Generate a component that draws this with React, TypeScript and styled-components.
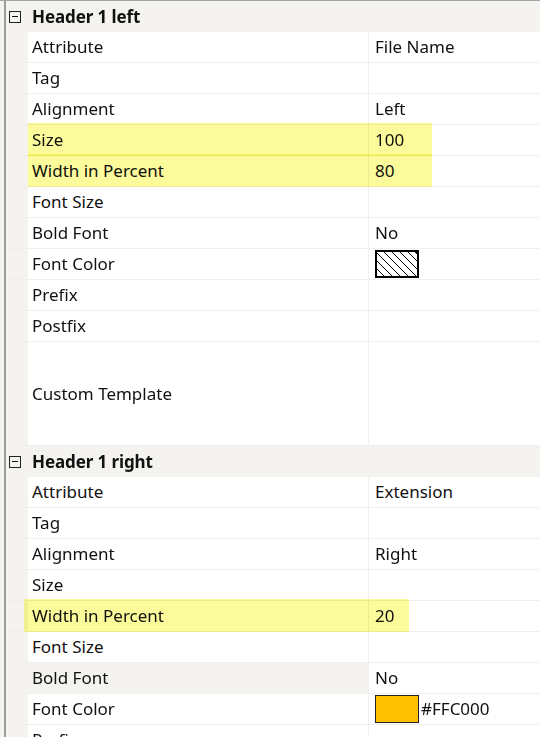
import React from "react";
import styled, { createGlobalStyle } from "styled-components";

const Global = createGlobalStyle`
  html, body { margin: 0; padding: 0; overflow: hidden; background: #f4f3ef; }
  body { font-family: "Noto Sans", "Open Sans", sans-serif; font-size: 17px; color: #111; }
`;

const Page = styled.div`
  border-top: 1px solid #a6a6a6;
  padding-left: 4px;
  height: 736px;
  overflow: hidden;
`;

const Sheet = styled.div`
  border-left: 2px solid #9c9c9c;
  display: flex;
  flex-direction: column;
  min-height: 100%;
`;

const HeaderRow = styled.div`
  display: grid;
  grid-template-columns: 22px 1fr;
  align-items: center;
  height: 31px;
  background: #f4f3ef;
`;

const Toggle = styled.span`
  width: 10px;
  height: 10px;
  border: 1px solid #222;
  margin-left: 3px;
  display: flex;
  align-items: center;
  justify-content: center;
  &::before {
    content: "";
    width: 6px;
    height: 1px;
    background: #111;
  }
`;

const HeaderTitle = styled.span`
  font-weight: 700;
  padding-left: 4px;
  letter-spacing: -0.1px;
`;

const Row = styled.div<{ $tall?: boolean; $mark?: number; $markShift?: number }>`
  position: relative;
  display: grid;
  grid-template-columns: 22px 340px 1fr;
  height: ${(p) => (p.$tall ? 103 : 30)}px;
  border-bottom: 1px solid #f0efeb;
  ${(p) =>
    p.$mark
      ? `&::after {
    content: "";
    position: absolute;
    left: ${22 + (p.$markShift ?? 0)}px;
    top: -2px;
    bottom: -1px;
    width: ${p.$mark}px;
    background: #fbfb9c;
    mix-blend-mode: multiply;
    filter: blur(0.6px);
    pointer-events: none;
  }`
      : ""}
`;

const Gutter = styled.span`
  background: #f4f3ef;
`;

const NameCell = styled.span<{ $selected?: boolean }>`
  background: ${(p) => (p.$selected ? "#f4f3ef" : "#ffffff")};
  display: flex;
  align-items: center;
  padding-left: 4px;
  padding-bottom: 1px;
`;

const ValueCell = styled.span`
  background: #ffffff;
  border-left: 1px solid #f0efeb;
  display: flex;
  align-items: center;
  gap: 2px;
  padding-left: 6px;
  padding-bottom: 1px;
`;

const HatchSwatch = styled.span`
  box-sizing: border-box;
  width: 44px;
  height: 28px;
  margin-top: 1px;
  border: 2px solid #000;
  background: repeating-linear-gradient(
    45deg,
    #ffffff 0px,
    #ffffff 4.6px,
    #000000 4.6px,
    #000000 5.6px
  );
`;

const ColorSwatch = styled.span<{ $color: string }>`
  box-sizing: border-box;
  width: 44px;
  height: 28px;
  margin-top: 1px;
  border: 1px solid #222;
  background: ${(p) => p.$color};
`;

type Item = {
  name: string;
  value?: React.ReactNode;
  tall?: boolean;
  selected?: boolean;
  mark?: number;
  markShift?: number;
};

const sections: { title: string; items: Item[] }[] = [
  {
    title: "Header 1 left",
    items: [
      { name: "Attribute", value: "File Name" },
      { name: "Tag" },
      { name: "Alignment", value: "Left" },
      { name: "Size", value: "100", mark: 404 },
      { name: "Width in Percent", value: "80", mark: 404 },
      { name: "Font Size" },
      { name: "Bold Font", value: "No" },
      { name: "Font Color", value: <HatchSwatch /> },
      { name: "Prefix" },
      { name: "Postfix" },
      { name: "Custom Template", tall: true },
    ],
  },
  {
    title: "Header 1 right",
    items: [
      { name: "Attribute", value: "Extension" },
      { name: "Tag" },
      { name: "Alignment", value: "Right" },
      { name: "Size" },
      { name: "Width in Percent", value: "20", mark: 385, markShift: -4 },
      { name: "Font Size" },
      { name: "Bold Font", value: "No", selected: true },
      {
        name: "Font Color",
        value: (
          <>
            <ColorSwatch $color="#ffc000" />
            <span>#FFC000</span>
          </>
        ),
      },
      { name: "Prefix" },
      { name: "Postfix" },
    ],
  },
];

export default function App() {
  return (
    <>
      <Global />
      <Page>
        <Sheet>
          {sections.map((s) => (
            <React.Fragment key={s.title}>
              <HeaderRow>
                <Toggle />
                <HeaderTitle>{s.title}</HeaderTitle>
              </HeaderRow>
              {s.items.map((it) => (
                <Row key={it.name} $tall={it.tall} $mark={it.mark} $markShift={it.markShift}>
                  <Gutter />
                  <NameCell $selected={it.selected}>{it.name}</NameCell>
                  <ValueCell>{it.value}</ValueCell>
                </Row>
              ))}
            </React.Fragment>
          ))}
        </Sheet>
      </Page>
    </>
  );
}
